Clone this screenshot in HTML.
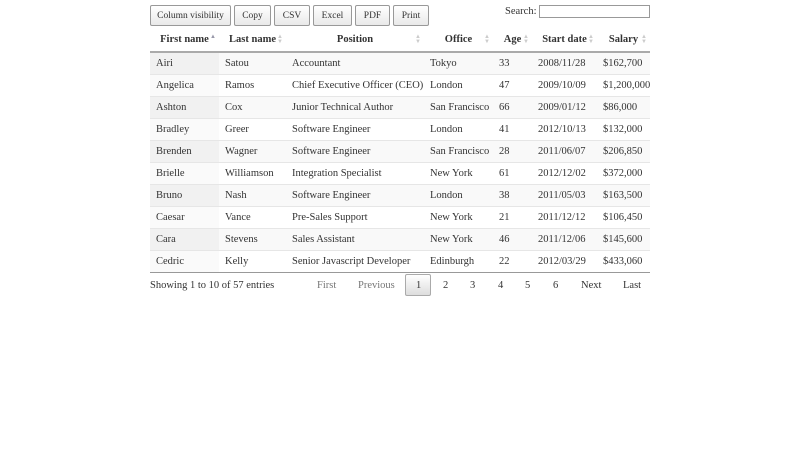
<!DOCTYPE html>
<html><head><style>
body{margin:0;background:#fff;font-family:"Liberation Serif",serif;font-size:10px;color:#333;width:800px;height:450px;position:relative;overflow:hidden}
.btn{position:absolute;top:5px;height:21px;box-sizing:border-box;border:1px solid #999;border-radius:2px;background:linear-gradient(#fff,#e9e9e9);font-size:9.5px;display:flex;align-items:center;justify-content:center;color:#333;white-space:nowrap}
.search{position:absolute;left:505px;top:6px;font-size:10.5px;white-space:nowrap}
.search span{position:absolute;left:34px;top:-1px;width:109px;height:11px;border:1px solid #999}
table{position:absolute;left:150px;top:28px;width:500px;border-collapse:collapse;table-layout:fixed}
th,td{white-space:nowrap;overflow:visible}
th{height:24px;font-weight:bold;font-size:10.5px;border-bottom:2px solid #aaa;padding:0 4px;position:relative;text-align:center;box-sizing:border-box}
td{height:22px;padding:1px 0 0 6px;border-top:1px solid #e6e6e6;box-sizing:border-box;font-size:10.5px}
tbody tr:nth-child(odd) td{background:#f9f9f9}
tbody tr:nth-child(odd) td:first-child{background:#f1f1f1}
tbody tr:nth-child(even) td:first-child{background:#fafafa}
tbody tr:first-child td{border-top:none}
tbody tr:last-child td{border-bottom:1px solid #999}
.s{position:absolute;right:3px;top:7px;font-size:6px;color:#ccc;line-height:5px}
.pg{position:absolute;top:280px;font-size:10.5px;color:#333}
.pg.d{color:#777}
</style></head><body>
<div class="btn" style="left:150px;width:81px">Column visibility</div>
<div class="btn" style="left:234px;width:37px">Copy</div>
<div class="btn" style="left:274px;width:36px">CSV</div>
<div class="btn" style="left:313px;width:39px">Excel</div>
<div class="btn" style="left:355px;width:35px">PDF</div>
<div class="btn" style="left:393px;width:36px">Print</div>
<div class="search">Search:<span></span></div>
<table>
<colgroup><col style="width:69px"><col style="width:67px"><col style="width:138px"><col style="width:69px"><col style="width:39px"><col style="width:65px"><col style="width:53px"></colgroup>
<thead><tr><th>First name<span class="s" style="color:#99a">▲</span></th><th>Last name<span class="s">▲<br>▼</span></th><th>Position<span class="s">▲<br>▼</span></th><th>Office<span class="s">▲<br>▼</span></th><th>Age<span class="s">▲<br>▼</span></th><th>Start date<span class="s">▲<br>▼</span></th><th>Salary<span class="s">▲<br>▼</span></th></tr></thead>
<tbody>
<tr><td>Airi</td><td>Satou</td><td>Accountant</td><td>Tokyo</td><td>33</td><td>2008/11/28</td><td>$162,700</td></tr>
<tr><td>Angelica</td><td>Ramos</td><td>Chief Executive Officer (CEO)</td><td>London</td><td>47</td><td>2009/10/09</td><td>$1,200,000</td></tr>
<tr><td>Ashton</td><td>Cox</td><td>Junior Technical Author</td><td>San Francisco</td><td>66</td><td>2009/01/12</td><td>$86,000</td></tr>
<tr><td>Bradley</td><td>Greer</td><td>Software Engineer</td><td>London</td><td>41</td><td>2012/10/13</td><td>$132,000</td></tr>
<tr><td>Brenden</td><td>Wagner</td><td>Software Engineer</td><td>San Francisco</td><td>28</td><td>2011/06/07</td><td>$206,850</td></tr>
<tr><td>Brielle</td><td>Williamson</td><td>Integration Specialist</td><td>New York</td><td>61</td><td>2012/12/02</td><td>$372,000</td></tr>
<tr><td>Bruno</td><td>Nash</td><td>Software Engineer</td><td>London</td><td>38</td><td>2011/05/03</td><td>$163,500</td></tr>
<tr><td>Caesar</td><td>Vance</td><td>Pre-Sales Support</td><td>New York</td><td>21</td><td>2011/12/12</td><td>$106,450</td></tr>
<tr><td>Cara</td><td>Stevens</td><td>Sales Assistant</td><td>New York</td><td>46</td><td>2011/12/06</td><td>$145,600</td></tr>
<tr><td>Cedric</td><td>Kelly</td><td>Senior Javascript Developer</td><td>Edinburgh</td><td>22</td><td>2012/03/29</td><td>$433,060</td></tr>
</tbody></table>
<div style="position:absolute;left:150px;top:280px;font-size:10.5px">Showing 1 to 10 of 57 entries</div>
<div style="position:absolute;left:405px;top:274px;width:26px;height:22px;box-sizing:border-box;border:1px solid #aaa;border-radius:2px;background:linear-gradient(#fff,#ddd)"></div>
<span class="pg d" style="left:317px">First</span>
<span class="pg d" style="left:358px">Previous</span>
<span class="pg" style="left:416px">1</span>
<span class="pg" style="left:443px">2</span>
<span class="pg" style="left:470px">3</span>
<span class="pg" style="left:498px">4</span>
<span class="pg" style="left:525px">5</span>
<span class="pg" style="left:553px">6</span>
<span class="pg" style="left:581px">Next</span>
<span class="pg" style="left:623px">Last</span>
</body></html>
